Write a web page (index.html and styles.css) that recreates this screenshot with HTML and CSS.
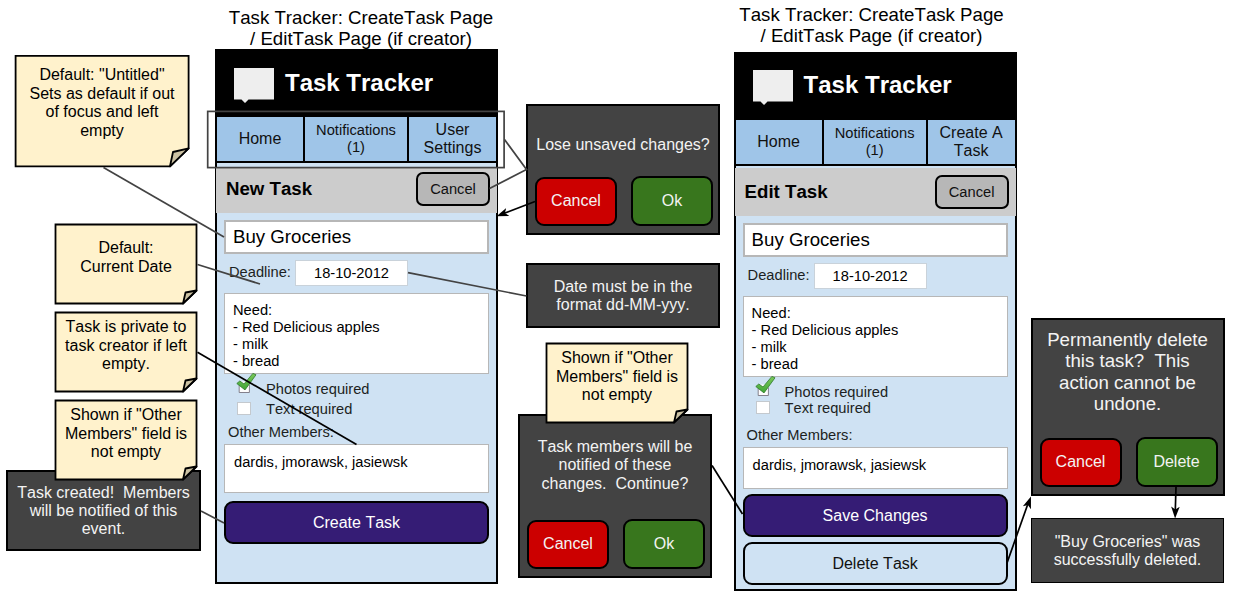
FILE: index.html
```html
<!DOCTYPE html>
<html lang="en">
<head>
<meta charset="utf-8">
<title>Task Tracker wireframes</title>
<link rel="stylesheet" href="styles.css">
</head>
<body>
<svg class="defs" width="0" height="0">
  <defs>
    <linearGradient id="tick" x1="0" y1="0" x2="0" y2="1">
      <stop offset="0" stop-color="#7cc95a"/>
      <stop offset="1" stop-color="#3fa535"/>
    </linearGradient>
    <symbol id="check" viewBox="0 0 21 22">
      <rect x="3" y="9.5" width="10.5" height="11" fill="#fdfdfd"/>
      <path d="M3.2 12.5v8h10.2v-8" fill="none" stroke="#77737f" stroke-width=".9"/>
      <path d="M.8 11.5 3.8 9 8 12 16.9 1.4 20 2.8 9 17.9Z" fill="url(#tick)" stroke="#2f7a2c" stroke-width=".8" stroke-linejoin="round"/>
    </symbol>
    <symbol id="bubble" viewBox="0 0 40 35">
      <path d="M0 0H40V31.5H14.5L11 35 7.5 31.5H0Z" fill="#eee"/>
    </symbol>
    <symbol id="note" viewBox="0 0 144 82">
      <path d="M1.5 1.5H142.5V67.5L129 80.5H1.5Z" fill="#fff2cc" stroke="#000" stroke-width="1.8"/>
      <path d="M142.5 67.5 131.5 69.5 129 80.5Z" fill="#ccc2a3" stroke="#000" stroke-width="1.8" stroke-linejoin="round"/>
    </symbol>
    <marker id="arrow" viewBox="0 0 12 10" refX="11.5" refY="5" markerWidth="12" markerHeight="10" markerUnits="userSpaceOnUse" orient="auto">
      <path d="M12 5 0 .7 3 5 0 9.3Z"/>
    </marker>
  </defs>
</svg>
<main class="canvas">
  <h2 class="caption caption-create">Task Tracker: CreateTask Page<br>/ EditTask Page (if creator)</h2>
  <h2 class="caption caption-edit">Task Tracker: CreateTask Page<br>/ EditTask Page (if creator)</h2>

  <section class="phone phone-create">
    <header class="brand"><svg class="logo"><use href="#bubble"/></svg><span>Task Tracker</span></header>
    <nav class="tabs"><a>Home</a><a class="small">Notifications<br>(1)</a><a>User<br>Settings</a></nav>
    <div class="bar"><h1>New Task</h1><button class="btn-gray">Cancel</button></div>
    <div class="form">
      <div class="field name">Buy Groceries</div>
      <div class="deadline"><label>Deadline:</label><div class="date">18-10-2012</div></div>
      <div class="field notes">Need:<br>- Red Delicious apples<br>- milk<br>- bread</div>
      <div class="option"><svg class="check"><use href="#check"/></svg><span>Photos required</span></div>
      <div class="option second"><i class="box"></i><span>Text required</span></div>
      <label class="members-label">Other Members:</label>
      <div class="field members">dardis, jmorawsk, jasiewsk</div>
      <button class="wide primary">Create Task</button>
    </div>
  </section>

  <section class="phone phone-edit">
    <header class="brand"><svg class="logo"><use href="#bubble"/></svg><span>Task Tracker</span></header>
    <nav class="tabs"><a>Home</a><a class="small">Notifications<br>(1)</a><a>Create A<br>Task</a></nav>
    <div class="bar"><h1>Edit Task</h1><button class="btn-gray">Cancel</button></div>
    <div class="form">
      <div class="field name">Buy Groceries</div>
      <div class="deadline"><label>Deadline:</label><div class="date">18-10-2012</div></div>
      <div class="field notes">Need:<br>- Red Delicious apples<br>- milk<br>- bread</div>
      <div class="option"><svg class="check"><use href="#check"/></svg><span>Photos required</span></div>
      <div class="option second"><i class="box"></i><span>Text required</span></div>
      <label class="members-label">Other Members:</label>
      <div class="field members">dardis, jmorawsk, jasiewsk</div>
      <button class="wide primary">Save Changes</button>
      <button class="wide outline">Delete Task</button>
    </div>
  </section>

  <div class="dark created">Task created!&nbsp; Members<br>will be notified of this<br>event.</div>
  <div class="dark date-format">Date must be in the<br>format dd-MM-yyy.</div>
  <div class="dark deleted">"Buy Groceries" was<br>successfully deleted.</div>

  <div class="dark dialog unsaved">
    <p>Lose unsaved changes?</p>
    <div class="actions"><button class="red">Cancel</button><button class="green">Ok</button></div>
  </div>
  <div class="dark dialog notify">
    <p>Task members will be<br>notified of these<br>changes.&nbsp; Continue?</p>
    <div class="actions"><button class="red">Cancel</button><button class="green">Ok</button></div>
  </div>
  <div class="dark dialog confirm">
    <p>Permanently delete<br>this task?&nbsp; This<br>action cannot be<br>undone.</p>
    <div class="actions"><button class="red">Cancel</button><button class="green">Delete</button></div>
  </div>

  <div class="note untitled">
    <svg class="paper" viewBox="0 0 176 114">
      <path d="M1.6 1.9H174.6V94.4L156 112.3H1.6Z" fill="#fff2cc" stroke="#000" stroke-width="1.8"/>
      <path d="M174.6 94.4 159 98 156 112.3Z" fill="#ccc2a3" stroke="#000" stroke-width="1.8" stroke-linejoin="round"/>
    </svg>
    <p>Default: "Untitled"<br>Sets as default if out<br>of focus and left<br>empty</p>
  </div>
  <div class="note current"><svg class="paper"><use href="#note"/></svg><p>Default:<br>Current Date</p></div>
  <div class="note private"><svg class="paper"><use href="#note"/></svg><p>Task is private to<br>task creator if left<br>empty.</p></div>
  <div class="note shown-left"><svg class="paper"><use href="#note"/></svg><p>Shown if "Other<br>Members" field is<br>not empty</p></div>
  <div class="note shown-mid"><svg class="paper"><use href="#note"/></svg><p>Shown if "Other<br>Members" field is<br>not empty</p></div>

  <svg class="links" width="1248" height="594" viewBox="0 0 1248 594">
    <g class="gray">
      <rect x="207.7" y="111.4" width="296.4" height="56.2"/>
      <path d="M103.5 167.5 224 237"/>
      <path d="M197.5 264.5 260 284"/>
      <path d="M201 511 224 523"/>
      <path d="M504.5 139.5 526.5 169.5 489.5 188.5"/>
      <path d="M408 272.7 526.5 296"/>
    </g>
    <g class="black">
      <path d="M197.5 352.3 356.5 444.5"/>
      <path d="M712 465.5 742.5 514"/>
      <path d="M535 201.5 505 213"/>
      <path d="M1007 563 1027.5 505"/>
      <path d="M1176 487 1175.3 510"/>
      <path class="head" d="M535 201.5 497 216"/>
      <path class="head" d="M1007 563 1030.8 497"/>
      <path class="head" d="M1176 487 1175.1 518"/>
    </g>
  </svg>
</main>
</body>
</html>
```
FILE: styles.css
```css
* { box-sizing: border-box; }
body { margin: 0; background: #fff; color: #000; font: 16px/18.4px "Liberation Sans", Arial, sans-serif; font-kerning: none; }
h1, h2, p { margin: 0; font-weight: normal; }
button { font: inherit; padding: 0; font-kerning: none; }
.defs { position: absolute; }
.canvas { position: relative; width: 1248px; height: 594px; overflow: hidden; }

.caption { position: absolute; width: 290px; text-align: center; font-size: 18.67px; line-height: 21.4px; }
.caption-create { left: 216px; top: 6.6px; }
.caption-edit { left: 726.5px; top: 4px; }

/* phone mock-ups */
.phone { position: absolute; width: 283px; border: 2px solid #000; background: #cfe2f3; }
.phone-create { left: 215px; top: 49px; height: 535px; }
.phone-edit { left: 733.6px; top: 52px; height: 539px; }
.brand { display: flex; align-items: flex-start; height: 66px; padding: 17px 0 0 17px; background: #000; color: #fff; font-weight: bold; font-size: 24px; line-height: 28px; }
.brand span { padding-top: 1px; }
.logo { width: 40px; height: 35px; margin-right: 11px; }
.tabs { display: grid; grid-template-columns: 86px 102px 87px; gap: 2px; height: 46px; padding-bottom: 2px; background: #000; color: #111; }
.tabs a { display: flex; align-items: center; justify-content: center; text-align: center; background: #9fc5e8; }
.tabs .small { font-size: 14.67px; line-height: 17px; padding-bottom: 0; }
.bar { display: flex; align-items: flex-start; justify-content: space-between; height: 46px; margin: 4px -1px 0; padding: 5px 7px 0 10px; background: #ccc; }
.bar h1 { padding-top: 6px; font-weight: bold; font-size: 18.67px; line-height: 22px; }
.btn-gray { width: 74px; height: 34px; border: 2px solid #000; border-radius: 7px; background: #b7b7b7; color: #111; font-size: 14.67px; }
.form { display: flex; flex-direction: column; padding: 7px 7px 0; font-size: 14.67px; line-height: 17px; }
.field { border: 1px solid #b7b7b7; background: #fff; }
.name { height: 34px; padding: 4px 7px; border-width: 2px; font-size: 18.67px; line-height: 22px; }
.deadline { display: flex; height: 25px; margin: 7px 0; padding-left: 5px; color: #1c1f22; }
.deadline label { width: 66px; padding-top: 3px; }
.date { width: 113px; height: 26px; margin-top: -1px; padding: 3px 0; border: 1px solid #c9d2da; background: #fff; color: #000; text-align: center; line-height: 19px; }
.notes { height: 81px; padding: 8px; }
.option { display: flex; height: 18px; margin-top: 7px; padding-left: 13px; color: #1c1f22; }
.option span { width: 150px; }
.check { width: 21px; height: 22px; margin: -9px 9px 0 -1px; flex: none; }
.box { width: 14px; height: 13px; margin: 1px 15px 0 0; border: 1px solid #c4c9ce; background: #fff; }
.second { margin-top: 2px; }
.members-label { padding-left: 4px; margin-top: 5px; height: 20px; color: #1c1f22; }
.members { height: 49px; padding: 9px; }
.wide { height: 43px; border: 2px solid #000; border-radius: 9px; font-size: 16px; }
.primary { margin-top: 8px; background: #351c75; color: #fff; }
.outline { margin-top: 5px; background: #cfe2f3; color: #111; }
.phone-edit .brand { padding-top: 16px; }
.phone-edit .bar { height: 48px; margin-top: 2px; padding-top: 7px; }
.phone-edit .second { margin-top: -2px; }
.phone-edit .members-label { margin-top: 9px; }
.phone-edit .members { height: 42px; }
.phone-edit .primary { margin-top: 5px; }

/* dark message boxes */
.dark { position: absolute; border: 2px solid #000; background: #434343; color: #f3f3f3; text-align: center; }
.created { left: 6px; top: 470px; width: 195px; height: 81px; padding-top: 11.5px; }
.date-format { left: 526px; top: 263px; width: 194px; height: 65px; padding-top: 13px; }
.deleted { left: 1031px; top: 518px; width: 193px; height: 65px; padding-top: 13.6px; border-width: 1px; }
.dialog { display: flex; flex-direction: column; justify-content: space-between; width: 194px; }
.actions { display: flex; justify-content: space-between; align-items: flex-end; padding: 0 5px 7px 7px; }
.actions button { width: 82px; height: 49px; border: 2px solid #000; border-radius: 9px; color: #f3f3f3; }
.actions .red { background: #c00; }
.actions .green { height: 50px; background: #38761d; }
.unsaved { left: 526px; top: 104px; height: 131px; padding-top: 30px; }
.notify { left: 518px; top: 414px; height: 164px; padding-top: 22px; }
.confirm { left: 1030.5px; top: 318px; height: 178px; padding-top: 9px; }
.confirm p { font-size: 18.67px; line-height: 21.4px; }

/* sticky notes */
.note { position: absolute; width: 144px; height: 82px; text-align: center; }
.note p { position: relative; }
.paper { position: absolute; left: 0; top: 0; width: 100%; height: 100%; }
.untitled { left: 14px; top: 54px; width: 176px; height: 114px; padding-top: 12.4px; }
.current { left: 54px; top: 223px; padding-top: 16.4px; }
.private { left: 54px; top: 311px; padding-top: 7.4px; }
.shown-left { left: 54px; top: 399px; padding-top: 7.4px; }
.shown-mid { left: 545px; top: 342px; padding-top: 7.4px; }

/* connectors */
.links { position: absolute; left: 0; top: 0; fill: none; stroke-width: 1.7; }
.gray { stroke: #434343; }
.black { stroke: #000; }
.head { marker-end: url(#arrow); stroke: none; }
```
